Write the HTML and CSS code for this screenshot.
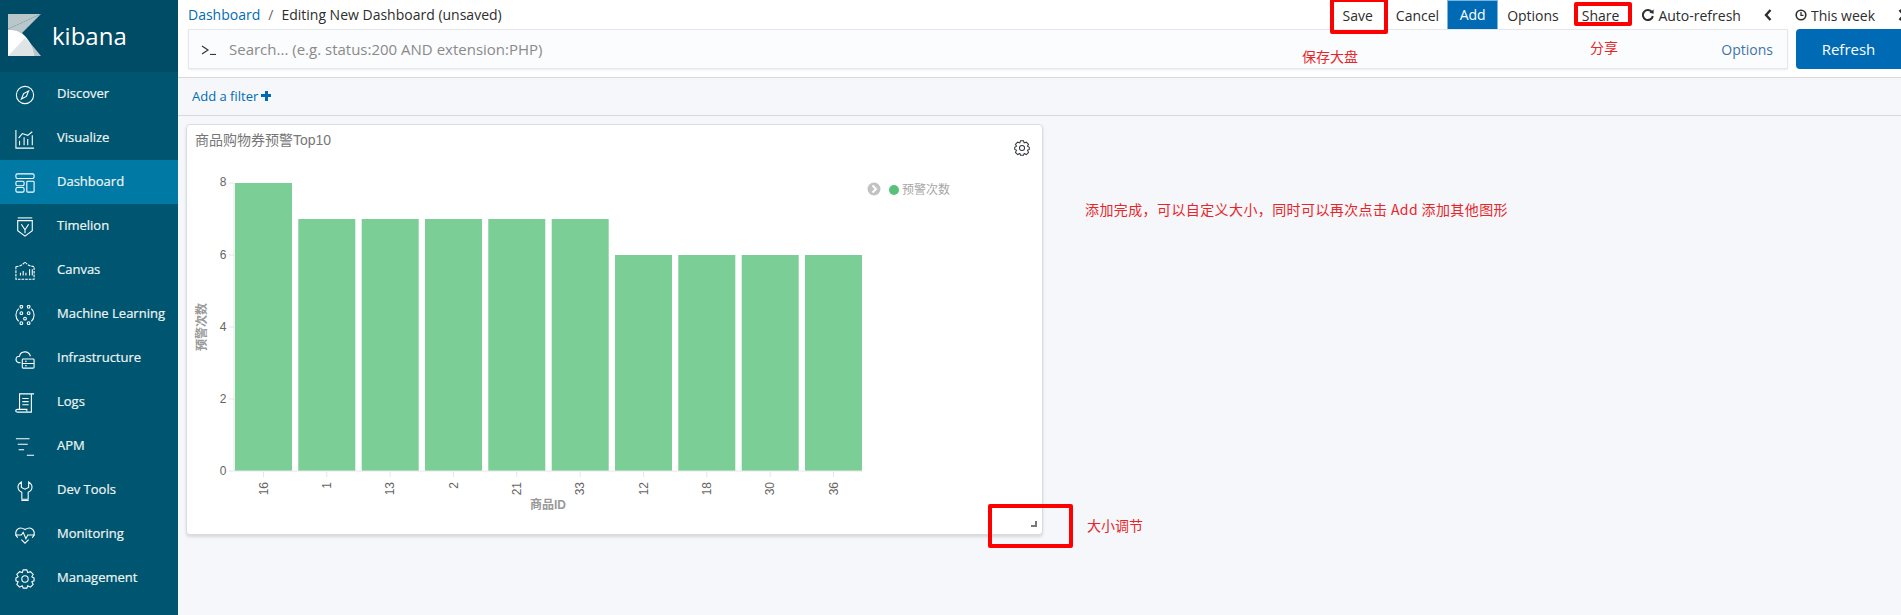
FILE: index.html
```html
<!DOCTYPE html>
<html lang="en">
<head>
    <meta charset="UTF-8">
    <title>Dashboard - Kibana</title>
    <link rel="stylesheet" href="styles.css">
</head>
<body>

    <!-- Sidebar -->
    <nav class="sidebar">
        <div class="logo">
            <svg class="logo-mark" viewBox="0 0 33 42" width="33" height="42">
                <polygon points="0,0 33,0 0,15" fill="#b9c6ca"/>
                <polygon points="33,0 14,19 33,42 0,42 0,15" fill="#b9c6ca"/>
                <path d="M0 16 C12 15 23 23 26 42 H0Z" fill="#fff"/>
                <path d="M0 42 L17 24 C22 28 25 34 26 42Z" fill="#dfe5e7"/>
            </svg>
            <span class="logo-text">kibana</span>
        </div>
        <a class="nav-item">
            <svg class="nav-icon" viewBox="0 0 22 22"><circle cx="11" cy="11" r="9.5"/><path d="M15 6.5 L12.5 12.5 L7 15.500 L9.5 9.5Z"/></svg>
            Discover
        </a>
        <a class="nav-item">
            <svg class="nav-icon" viewBox="0 0 22 22"><path d="M1 1 V21 H21"/><path d="M4 10 L8 5 L14 7 L19 3"/><path d="M5 18 V13 M10 18 V9 M14 18 V11 M19 18 V7"/></svg>
            Visualize
        </a>
        <a class="nav-item active">
            <svg class="nav-icon" viewBox="0 0 22 22"><rect x="1" y="1" width="20" height="5" rx="1.5"/><rect x="1" y="9" width="9" height="5" rx="1.5"/><rect x="1" y="16" width="9" height="5" rx="1.5"/><rect x="13" y="9" width="8" height="12" rx="1"/></svg>
            Dashboard
        </a>
        <a class="nav-item">
            <svg class="nav-icon" viewBox="0 0 22 22"><path d="M3 1 H19"/><path d="M3 4 H19 V15 L11 21 L3 15Z"/><path d="M7 8 L11 14 L15 8 M11 14 V18"/></svg>
            Timelion
        </a>
        <a class="nav-item">
            <svg class="nav-icon" viewBox="0 0 22 22"><path d="M1 6 C4 6 8 5 11 1 C14 5 18 6 21 6 V20 H1Z" stroke-dasharray="3 1"/><path d="M6 16 V13 M9 16 V11 M12 16 V13 M16 9 V16 M19 9 V16"/></svg>
            Canvas
        </a>
        <a class="nav-item">
            <svg class="nav-icon" viewBox="0 0 22 22"><circle cx="7" cy="2" r="1.5"/><circle cx="15" cy="2" r="1.5"/><circle cx="7" cy="9" r="1.5"/><circle cx="15" cy="9" r="1.5"/><circle cx="11" cy="15" r="1.5"/><circle cx="7" cy="20" r="1.5"/><circle cx="15" cy="20" r="1.5"/><path d="M4 4 C0 8 0 14 4 18 M18 4 C22 8 22 14 18 18"/></svg>
            Machine Learning
        </a>
        <a class="nav-item">
            <svg class="nav-icon" viewBox="0 0 22 22"><path d="M6 15 H4 C0 14 0 8 5 8 C6 2 15 1 17 8"/><rect x="8" y="11" width="13" height="10" rx="1"/><path d="M8 16 H21 M11 13.5 H13 M11 18.5 H13"/></svg>
            Infrastructure
        </a>
        <a class="nav-item">
            <svg class="nav-icon" viewBox="0 0 22 22"><path d="M5 18 V1 H21"/><path d="M18 1 V21 H3 C0 21 0 18 3 18 H13 V20"/><path d="M8 6 H15 M8 9.5 H15 M8 13 H15"/></svg>
            Logs
        </a>
        <a class="nav-item">
            <svg class="nav-icon" viewBox="0 0 22 22"><path d="M1 2 H16 M3 8 H14 M4 14 H10 M13 20 H21"/></svg>
            APM
        </a>
        <a class="nav-item">
            <svg class="nav-icon" viewBox="0 0 22 22"><path d="M7 1 C2 4 2 10 7.500 12.500 V20 H14.500 V12.500 C20 10 20 4 15 1 V7 L11 9 L7 7Z"/><path d="M7 21.500 H15"/></svg>
            Dev Tools
        </a>
        <a class="nav-item">
            <svg class="nav-icon" viewBox="0 0 22 22"><path d="M3 14 C-2 8 3 0 11 5 C19 0 24 8 19 14"/><path d="M0 11 H7 L9 8 L12 15 L14 11 H22"/><path d="M7 16 L11 20 L15 16"/></svg>
            Monitoring
        </a>
        <a class="nav-item">
            <svg class="nav-icon" viewBox="0 0 22 22"><circle cx="11" cy="11" r="3.5"/><path d="M9 1 H13 L14 4 L17 3 L20 6 L18.5 8.5 L21 10 V13 L18.5 14 L20 17 L17 20 L14 18.5 L13 21 H9 L8 18.5 L5 20 L2 17 L3.5 14 L1 13 V10 L3.5 8.5 L2 6 L5 3 L8 4Z"/></svg>
            Management
        </a>
    </nav>

    <main class="content">

        <!-- Top bar -->
        <header class="topbar">
            <div class="topnav">
                <div class="breadcrumbs">
                    <a class="link">Dashboard</a>
                    <span class="crumb-sep">/</span>
                    <span>Editing New Dashboard (unsaved)</span>
                </div>
                <div class="menu">
                    <span class="menu-item">Save</span>
                    <span class="menu-item">Cancel</span>
                    <span class="menu-add">Add</span>
                    <span class="menu-item">Options</span>
                    <span class="menu-item">Share</span>
                    <span class="menu-item">
                        <svg class="mini-icon" viewBox="0 0 12 12" width="12" height="12"><path d="M10 3.2 A5 5 0 1 0 10.8 7" fill="none" stroke="#2d2d2d" stroke-width="2"/><polygon points="7.5,3.8 11.6,0.6 11.6,4.8" fill="#2d2d2d"/></svg>
                        Auto-refresh
                    </span>
                    <svg class="chevron" viewBox="0 0 8 12" width="8" height="12"><path d="M6.5 1 L2 6 L6.5 11" fill="none" stroke="#2d2d2d" stroke-width="2.4"/></svg>
                    <span class="menu-item">
                        <svg class="mini-icon" viewBox="0 0 12 12" width="12" height="12"><circle cx="6" cy="6" r="4.8" fill="none" stroke="#2d2d2d" stroke-width="1.6"/><path d="M6 3 V6.4 H8.5" fill="none" stroke="#2d2d2d" stroke-width="1.3"/></svg>
                        This week
                    </span>
                    <svg class="chevron" viewBox="0 0 8 12" width="8" height="12"><path d="M1.5 1 L6 6 L1.5 11" fill="none" stroke="#2d2d2d" stroke-width="2.4"/></svg>
                </div>
            </div>
            <div class="searchrow">
                <div class="searchbox">
                    <svg class="prompt" viewBox="0 0 15 10" width="15" height="10"><path d="M1 1 L7 5 L1 9" fill="none" stroke="#343741" stroke-width="1.2"/><path d="M9 9.5 H15" stroke="#343741" stroke-width="1.2"/></svg>
                    <span class="placeholder">Search... (e.g. status:200 AND extension:PHP)</span>
                    <a class="link search-options">Options</a>
                </div>
                <button class="refresh">Refresh</button>
            </div>
        </header>

        <div class="filterbar">
            <a class="link">Add a filter</a>
            <span class="plus"></span>
        </div>

        <!-- Dashboard panel -->
        <section class="panel">
            <div class="panel-head">
                <span class="panel-title">商品购物券预警Top10</span>
                <svg class="panel-gear" viewBox="0 0 22 22" width="16" height="16"><circle cx="11" cy="11" r="3.5"/><path d="M9 1 H13 L14 4 L17 3 L20 6 L18.5 8.5 L21 10 V13 L18.5 14 L20 17 L17 20 L14 18.5 L13 21 H9 L8 18.5 L5 20 L2 17 L3.5 14 L1 13 V10 L3.5 8.5 L2 6 L5 3 L8 4Z"/></svg>
            </div>
            <!-- viewBox uses page coordinates so the numbers read off the picture -->
            <svg class="chart" viewBox="187 165 855 369" width="855" height="369">
                <g class="bars">
                    <rect x="235" y="183" width="57" height="288"/>
                    <rect x="298.3" y="219" width="57" height="252"/>
                    <rect x="361.7" y="219" width="57" height="252"/>
                    <rect x="425" y="219" width="57" height="252"/>
                    <rect x="488.3" y="219" width="57" height="252"/>
                    <rect x="551.7" y="219" width="57" height="252"/>
                    <rect x="615" y="255" width="57" height="216"/>
                    <rect x="678.3" y="255" width="57" height="216"/>
                    <rect x="741.7" y="255" width="57" height="216"/>
                    <rect x="805" y="255" width="57" height="216"/>
                </g>
                <path class="axis" d="M234 183 H229 M234 255 H229 M234 327 H229 M234 399 H229 M234 471 H229 M234 183 V471 H862"/>
                <path class="axis" d="M263.5 472 V477 M326.8 472 V477 M390.2 472 V477 M453.5 472 V477 M516.8 472 V477 M580.2 472 V477 M643.5 472 V477 M706.8 472 V477 M770.2 472 V477 M833.5 472 V477"/>
                <g class="ytick">
                    <text x="223" y="186">8</text>
                    <text x="223" y="259">6</text>
                    <text x="223" y="331">4</text>
                    <text x="223" y="403">2</text>
                    <text x="223" y="475">0</text>
                </g>
                <g class="xtick">
                    <text transform="translate(263.5 482) rotate(-90)" y="4">16</text>
                    <text transform="translate(326.8 482) rotate(-90)" y="4">1</text>
                    <text transform="translate(390.2 482) rotate(-90)" y="4">13</text>
                    <text transform="translate(453.5 482) rotate(-90)" y="4">2</text>
                    <text transform="translate(516.8 482) rotate(-90)" y="4">21</text>
                    <text transform="translate(580.2 482) rotate(-90)" y="4">33</text>
                    <text transform="translate(643.5 482) rotate(-90)" y="4">12</text>
                    <text transform="translate(706.8 482) rotate(-90)" y="4">18</text>
                    <text transform="translate(770.2 482) rotate(-90)" y="4">30</text>
                    <text transform="translate(833.5 482) rotate(-90)" y="4">36</text>
                </g>
                <text class="axis-title" x="548" y="509" text-anchor="middle">商品ID</text>
                <text class="axis-title" transform="translate(206 327) rotate(-90)" text-anchor="middle">预警次数</text>
                <circle cx="874" cy="189" r="6.5" fill="#c2c2c2"/>
                <path d="M872.5 185.5 L876 189 L872.5 192.500" fill="none" stroke="#fff" stroke-width="2"/>
                <circle cx="894" cy="190" r="5" fill="#57c17b"/>
                <text class="legend" x="902" y="194">预警次数</text>
            </svg>
            <span class="resize-handle"></span>
        </section>

        <!-- Red notes drawn over the screenshot -->
        <span class="mark mark-save"></span>
        <span class="mark mark-share"></span>
        <span class="mark mark-resize"></span>
        <span class="note note-save">保存大盘</span>
        <span class="note note-share">分享</span>
        <span class="note note-added">添加完成，可以自定义大小，同时可以再次点击 Add 添加其他图形</span>
        <span class="note note-resize">大小调节</span>
    </main>

</body>
</html>
```

FILE: styles.css
```css
* {
    box-sizing: border-box;
}
html, body {
    height: 100%;
}
body {
    margin: 0;
    display: flex;
    overflow: hidden;
    font-family: "Open Sans", "Noto Sans CJK SC", sans-serif;
    font-size: 14px;
    color: #2d2d2d;
    background-color: #f5f7fa;
}

/* Sidebar */
.sidebar {
    width: 178px;
    flex-shrink: 0;
    background-color: #005571;
}
.logo {
    height: 72px;
    padding: 14px 0 0 8px;
    display: flex;
    align-items: flex-start;
    gap: 11px;
    background-color: #004b66;
}
.logo-text {
    font-size: 24px;
    line-height: 44px;
    color: #fff;
}
.nav-item {
    height: 44px;
    padding: 0 0 2px 15px;
    display: flex;
    align-items: center;
    gap: 22px;
    font-size: 13px;
    color: #eef6f3;
    -webkit-text-stroke: 0.2px #eef6f3;
}
.nav-item.active {
    background-color: #0079a5;
}
.nav-icon {
    width: 20px;
    height: 20px;
    margin-top: 3px;
    fill: none;
    stroke: #fff;
    stroke-width: 1.2;
}

/* Top bar */
.content {
    flex: 1;
    position: relative;
    min-width: 0;
}
.topbar {
    height: 78px;
    background-color: #fff;
    border-bottom: 1px solid #d9d9d9;
}
.topnav {
    height: 29px;
    padding-left: 10px;
    display: flex;
    justify-content: space-between;
}
.breadcrumbs {
    display: flex;
    align-items: center;
    gap: 8px;
    font-size: 14px;
}
.crumb-sep {
    color: #666;
}
.link {
    color: #006bb4;
}
.menu {
    display: flex;
    align-items: center;
    flex-shrink: 0;
    height: 30px;
    gap: 23px;
    margin-right: -5px;
    font-size: 14px;
}
.menu-item {
    display: flex;
    align-items: center;
    gap: 4px;
    white-space: nowrap;
}
.menu-add {
    width: 51px;
    height: 30px;
    margin: 0 -14px 0 -15px;
    line-height: 30px;
    text-align: center;
    color: #fff;
    background-color: #006bb4;
    outline: 1px solid #7fb5d9;
    outline-offset: -1px;
}

.searchrow {
    display: flex;
    gap: 8px;
    padding-left: 10px;
}
.searchbox {
    width: 1600px;
    height: 40px;
    padding: 0 14px 0 12px;
    display: flex;
    align-items: center;
    background-color: #fbfcfd;
    border: 1px solid #e4e7ec;
    box-shadow: 0 1px 2px rgba(0, 0, 0, 0.08);
}
.prompt {
    margin-right: 13px;
    margin-top: 1px;
}
.placeholder {
    flex: 1;
    font-size: 15px;
    color: #8a8a8a;
}
.search-options {
    font-size: 14px;
    color: #3f74a8;
}
.refresh {
    width: 105px;
    height: 40px;
    border: 0;
    border-radius: 4px 0 0 4px;
    background-color: #006bb4;
    color: #fff;
    font-family: inherit;
    font-size: 15px;
}

/* Filter bar */
.filterbar {
    height: 38px;
    padding: 0 0 2px 14px;
    display: flex;
    align-items: center;
    gap: 3px;
    font-size: 13px;
    border-bottom: 1px solid #d9d9d9;
}
.plus {
    width: 10px;
    height: 10px;
    background:
        linear-gradient(#006bb4, #006bb4) center / 10px 3px no-repeat,
        linear-gradient(#006bb4, #006bb4) center / 3px 10px no-repeat;
}

/* Panel */
.panel {
    width: 857px;
    height: 411px;
    margin: 8px 0 0 8px;
    position: relative;
    background-color: #fff;
    border: 1px solid #d9dde3;
    border-radius: 4px;
    box-shadow: 0 2px 3px rgba(0, 0, 0, 0.12);
}
.panel-head {
    height: 40px;
    padding: 5px 12px 0 8px;
    display: flex;
    justify-content: space-between;
    align-items: flex-start;
}
.panel-title {
    font-family: "Liberation Sans", "Noto Sans CJK SC", sans-serif;
    font-size: 14px;
    line-height: 20px;
    color: #777;
}
.panel-gear {
    margin-top: 10px;
    fill: none;
    stroke: #343741;
    stroke-width: 1.4;
}
.chart {
    display: block;
}
.chart text {
    font-family: "Liberation Sans", "Noto Sans CJK SC", sans-serif;
}
.bars rect {
    fill: #7bce95;
}
.axis {
    fill: none;
    stroke: #e6e6e6;
    stroke-width: 1;
}
.ytick text {
    font-size: 12px;
    fill: #666;
    text-anchor: middle;
}
.xtick text {
    font-size: 12px;
    fill: #666;
    text-anchor: end;
}
.axis-title {
    font-size: 12px;
    font-weight: 700;
    fill: #999;
}
.legend {
    font-size: 12px;
    fill: #a6a6a6;
}
.resize-handle {
    position: absolute;
    right: 5px;
    bottom: 7px;
    width: 6px;
    height: 6px;
    border-right: 2px solid #777;
    border-bottom: 2px solid #777;
}

/* Red annotations, positions relative to .content */
.mark {
    position: absolute;
    border: 4px solid #f00;
    border-radius: 2px;
}
.mark-save {
    left: 1152px;
    top: -2px;
    width: 58px;
    height: 36px;
}
.mark-share {
    left: 1396px;
    top: 2px;
    width: 58px;
    height: 24px;
}
.mark-resize {
    left: 810px;
    top: 504px;
    width: 85px;
    height: 44px;
}
.note {
    position: absolute;
    font-family: "Noto Sans CJK SC", sans-serif;
    font-size: 14px;
    line-height: 16px;
    color: #e8262a;
    white-space: nowrap;
}
.note-save {
    left: 1124px;
    top: 48px;
}
.note-share {
    left: 1412px;
    top: 39px;
}
.note-added {
    left: 907px;
    top: 201px;
    letter-spacing: 0.4px;
}
.note-resize {
    left: 909px;
    top: 517px;
}
```
